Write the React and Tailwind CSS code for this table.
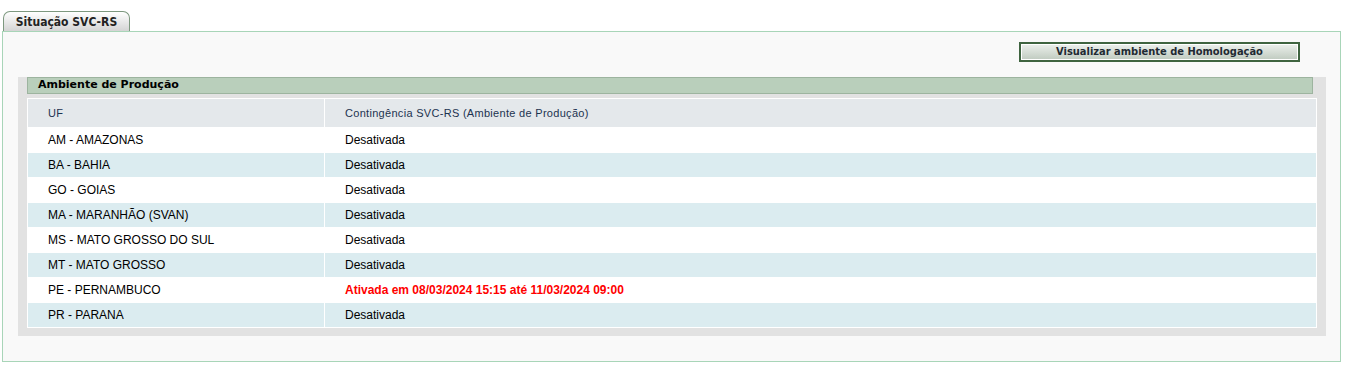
const rows = [
  { uf: "AM - AMAZONAS", status: "Desativada" },
  { uf: "BA - BAHIA", status: "Desativada" },
  { uf: "GO - GOIAS", status: "Desativada" },
  { uf: "MA - MARANHÃO (SVAN)", status: "Desativada" },
  { uf: "MS - MATO GROSSO DO SUL", status: "Desativada" },
  { uf: "MT - MATO GROSSO", status: "Desativada" },
  { uf: "PE - PERNAMBUCO", status: "Ativada em 08/03/2024 15:15 até 11/03/2024 09:00", active: true },
  { uf: "PR - PARANA", status: "Desativada" },
];

export default function App() {
  return (
    <div className="w-[1357px] h-[368px] bg-white font-['Liberation_Sans',Arial,sans-serif]">
      {/* Tab */}
      <div className="pt-[11px] pl-[3px]">
        <div className="w-[127px] h-[20px] rounded-t-[7px] border border-b-0 border-[#7d987f] bg-gradient-to-b from-white to-[#d4d4d4] flex items-center justify-center text-[12px] font-bold text-[#222] font-['DejaVu_Sans_Condensed','DejaVu_Sans',sans-serif]">
          Situação SVC-RS
        </div>
      </div>

      {/* Panel */}
      <div className="ml-[2px] w-[1339px] h-[331px] border border-[#a8d5b8] bg-[#f9f9f9]">
        <div className="flex justify-end pt-[10px] pr-[40px]">
          <button className="w-[281px] h-[20px] border-2 border-[#3f6440] bg-gradient-to-b from-[#edf1ed] to-[#bfcabf] shadow-[inset_0_0_0_1px_#ffffff] text-[11px] font-bold text-[#1f2a33] font-['DejaVu_Sans_Condensed','DejaVu_Sans',sans-serif]">
            Visualizar ambiente de Homologação
          </button>
        </div>

        <div className="mt-[24px] ml-[15px] w-[1308px] bg-[#e2e2e2] px-[9px] pb-[8px]">
          <div className="-mt-[9px] mr-[4px] h-[17px] border border-[#9db49f] bg-[#b9cfbb] pl-[10px] flex items-center text-[11px] font-bold text-black font-['DejaVu_Sans',sans-serif]">
            Ambiente de Produção
          </div>

          <div className="mt-[4px] bg-white p-px grid grid-cols-[296px_1fr] gap-px">
            <div className="h-[28px] bg-[#e4e8eb] pl-[20px] flex items-center text-[11px] tracking-[0.3px] text-[#1c3350]">UF</div>
            <div className="h-[28px] bg-[#e4e8eb] pl-[20px] flex items-center text-[11px] tracking-[0.3px] text-[#1c3350]">
              Contingência SVC-RS (Ambiente de Produção)
            </div>
            {rows.map((r, i) => {
              const bg = i % 2 === 0 ? "bg-white" : "bg-[#dbecf0]";
              return [
                <div key={r.uf + "a"} className={`h-[24px] ${bg} pl-[20px] flex items-center text-[12px] text-black`}>
                  {r.uf}
                </div>,
                <div
                  key={r.uf + "b"}
                  className={`h-[24px] ${bg} pl-[20px] flex items-center text-[12px] ${r.active ? "font-bold text-[#ff0000]" : "text-black"}`}
                >
                  {r.status}
                </div>,
              ];
            })}
          </div>
        </div>
      </div>
    </div>
  );
}
